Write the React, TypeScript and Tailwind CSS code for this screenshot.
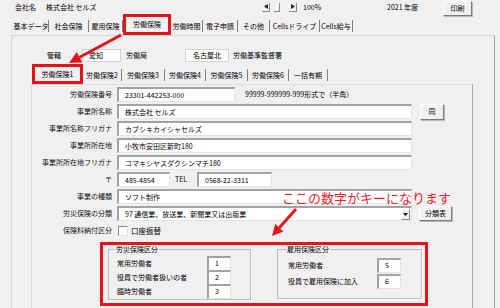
import React from "react";

const RED = "#e5141a";

function Field({ className = "", children }: { className?: string; children?: React.ReactNode }) {
  return (
    <div
      className={`h-[15px] bg-white border-l-2 border-t-2 border-r border-b border-l-[#a3a3a3] border-t-[#a3a3a3] border-r-[#e4e4e4] border-b-[#e4e4e4] flex items-center pl-[6px] whitespace-nowrap overflow-hidden ${className}`}
    >
      {children}
    </div>
  );
}

function Btn({ className = "", children }: { className?: string; children?: React.ReactNode }) {
  return (
    <div
      className={`bg-[#f0f0f0] border border-t-white border-l-white border-r-[#7a7a7a] border-b-[#7a7a7a] shadow-[1px_1px_0_#b9b9b9] flex items-center justify-center ${className}`}
    >
      {children}
    </div>
  );
}

function Row({ label, children }: { label: string; children?: React.ReactNode }) {
  return (
    <div className="h-[17px] flex items-center">
      <div className="w-[80px] text-right whitespace-nowrap text-[#111]">{label}</div>
      <div className="ml-[5px] flex items-center">{children}</div>
    </div>
  );
}

export default function App() {
  const outerTabs = [
    { name: "基本データ", w: "w-[35px]" },
    { name: "社会保険", w: "w-[40px]" },
    { name: "雇用保険", w: "w-[34px]" },
    { name: "労働保険", w: "w-[48px]", active: true },
    { name: "労働時間", w: "w-[32px]" },
    { name: "電子申請", w: "w-[35px]" },
    { name: "その他", w: "w-[32px]" },
    { name: "Cellsドライブ", w: "w-[50px]" },
    { name: "Cells給与", w: "w-[33px]" },
  ];
  const innerTabs = [
    { name: "労働保険1", w: "w-[51px]", active: true },
    { name: "労働保険2", w: "w-[39px]" },
    { name: "労働保険3", w: "w-[43px]" },
    { name: "労働保険4", w: "w-[41px]" },
    { name: "労働保険5", w: "w-[42px]" },
    { name: "労働保険6", w: "w-[41px]" },
    { name: "一括有期", w: "w-[39px]" },
  ];

  return (
    <div className="w-[500px] h-[308px] bg-[#f0f0f0] overflow-hidden relative text-[7px] leading-none text-black font-['Noto_Sans_CJK_JP','Liberation_Sans',sans-serif]">
      {/* top row */}
      <div className="h-[14px] flex items-center">
        <div className="w-[262px] flex pl-[15px]">
          <span>会社名</span>
          <span className="ml-[10px]">株式会社 セルズ</span>
        </div>
        <div className="w-[125px] flex items-center">
          <div className="w-[8px] h-[9px] border-r border-b border-[#8a8a8a] bg-[#f4f4f4] flex items-center justify-center">
            <svg width="4" height="5" viewBox="0 0 4 5"><polygon points="4,0 4,5 0,2.5" fill="#222" /></svg>
          </div>
          <div className="ml-[4px] w-[6px] h-[9px] border-r border-b border-[#8a8a8a] bg-[#f4f4f4]" />
          <div className="ml-[9px] w-[8px] h-[9px] border-r border-b border-[#8a8a8a] bg-[#f4f4f4] flex items-center justify-center">
            <svg width="4" height="5" viewBox="0 0 4 5"><polygon points="0,0 0,5 4,2.5" fill="#222" /></svg>
          </div>
          <span className="ml-[6px]">100%</span>
        </div>
        <div className="w-[56px]">2021 年度</div>
        <Btn className="w-[29px] h-[15px] self-start mt-[1px]">印刷</Btn>
      </div>

      {/* outer tabs */}
      <div className="h-[21px] flex items-start pl-[14px]">
        {outerTabs.map((t) =>
          t.active ? (
            <div key={t.name} className={`${t.w} h-[21px] border-[3px] border-[#e5141a] flex items-center justify-center whitespace-nowrap`}>
              {t.name}
            </div>
          ) : (
            <div key={t.name} className={`${t.w} h-[12px] mt-[6px] border-r border-[#7f7f7f] flex items-center justify-center whitespace-nowrap`}>
              {t.name}
            </div>
          )
        )}
      </div>

      {/* outer panel */}
      <div className="ml-[11px] w-[484px] h-[273px] border-l border-t border-r border-l-[#d6d6d6] border-t-[#d6d6d6] border-r-[#a0a0a0]">
        <div className="mt-[12px] h-[14px] flex items-center pl-[35px]">
          <span className="w-[14px]">管轄</span>
          <div className="ml-[21px] w-[39px] h-[13px] bg-white border border-[#d4d4d4] flex items-center pl-[6px]">愛知</div>
          <span className="ml-[5px] w-[21px]">労働局</span>
          <div className="ml-[38px] w-[44px] h-[13px] bg-white border border-[#d4d4d4] flex items-center justify-center">名古屋北</div>
          <span className="ml-[4px]">労働基準監督署</span>
        </div>

        {/* inner tabs */}
        <div className="mt-[2px] h-[20px] flex items-start pl-[20px]">
          {innerTabs.map((t) =>
            t.active ? (
              <div key={t.name} className={`${t.w} h-[20px] border-[3px] border-[#e5141a] flex items-center justify-center whitespace-nowrap`}>
                {t.name}
              </div>
            ) : (
              <div key={t.name} className={`${t.w} h-[12px] mt-[5px] border-r border-[#7f7f7f] flex items-center justify-center whitespace-nowrap`}>
                {t.name}
              </div>
            )
          )}
        </div>

        {/* inner panel */}
        <div className="ml-[19px] w-[442px] h-[240px] border-l border-t border-r border-l-[#dcdcdc] border-t-[#dcdcdc] border-r-[#a6a6a6] pt-[1px]">
          <Row label="労働保険番号">
            <Field className="w-[118px]">23301-442253-000</Field>
            <span className="ml-[10px] whitespace-nowrap">99999-999999-999形式で（半角）</span>
          </Row>
          <Row label="事業所名称">
            <Field className="w-[295px]">株式会社 セルズ</Field>
            <Btn className="ml-[8px] w-[24px] h-[16px]">同</Btn>
          </Row>
          <Row label="事業所名称フリガナ">
            <Field className="w-[295px]">カブシキカイシャセルズ</Field>
          </Row>
          <Row label="事業所所在地">
            <Field className="w-[295px]">小牧市安田区新町180</Field>
          </Row>
          <Row label="事業所所在地フリガナ">
            <Field className="w-[295px]">コマキシヤスダクシンマチ180</Field>
          </Row>
          <Row label="〒">
            <Field className="w-[53px]">485-4854</Field>
            <span className="ml-[5px] w-[22px]">TEL</span>
            <Field className="w-[75px]">0568-22-3311</Field>
          </Row>
          <Row label="事業の種類">
            <Field className="w-[295px]">ソフト制作</Field>
          </Row>
          <Row label="労災保険の分類">
            <Field className="w-[295px] pr-[1px]">
              <span className="flex-1">97 通信業、放送業、新聞業又は出版業</span>
              <div className="w-[9px] h-[11px] bg-[#f0f0f0] border border-t-white border-l-white border-r-[#8a8a8a] border-b-[#8a8a8a] flex items-center justify-center">
                <svg width="5" height="3" viewBox="0 0 5 3"><polygon points="0,0 5,0 2.5,3" fill="#111" /></svg>
              </div>
            </Field>
            <Btn className="ml-[7px] w-[33px] h-[15px]">分類表</Btn>
          </Row>
          <Row label="保険料納付区分">
            <div className="ml-[1px] w-[10px] h-[10px] bg-white border-l border-t border-r border-b border-l-[#8a8a8a] border-t-[#8a8a8a] border-r-[#e0e0e0] border-b-[#e0e0e0]" />
            <span className="ml-[3px] text-[7.5px]">口座振替</span>
          </Row>

          {/* highlighted groups */}
          <div className="ml-[68px] mt-[3px] w-[328px] h-[64px] border-[3px] border-[#e5141a] flex items-start pl-[5px]">
            <fieldset className="w-[143px] border border-[#bcbcbc] shadow-[1px_1px_0_#fff] pl-[8px] pb-[1px]">
              <legend className="ml-[-2px] px-[1px] leading-[8px]">労災保険区分</legend>
              <div className="pt-[3px]">
                {[
                  ["常用労働者", "1"],
                  ["役員で労働者扱いの者", "2"],
                  ["臨時労働者", "3"],
                ].map(([l, v]) => (
                  <div key={l} className="h-[14px] flex items-center">
                    <span className="w-[90px] whitespace-nowrap">{l}</span>
                    <Field className="w-[24px] h-[13px]">{v}</Field>
                  </div>
                ))}
              </div>
            </fieldset>
            <fieldset className="ml-[26px] w-[145px] h-[54px] border border-[#bcbcbc] shadow-[1px_1px_0_#fff] pl-[10px]">
              <legend className="ml-[-2px] px-[1px] leading-[8px]">雇用保険区分</legend>
              <div className="pt-[4px]">
                {[
                  ["常用労働者", "5"],
                  ["役員で雇用保険に加入", "6"],
                ].map(([l, v]) => (
                  <div key={l} className="h-[16px] flex items-center">
                    <span className="w-[89px] whitespace-nowrap">{l}</span>
                    <Field className="w-[24px] h-[14px]">{v}</Field>
                  </div>
                ))}
              </div>
            </fieldset>
          </div>
        </div>
      </div>

      {/* annotations */}
      <svg className="absolute left-0 top-0 pointer-events-none" width="500" height="308" viewBox="0 0 500 308">
        <line x1="121" y1="35" x2="79.6" y2="57.3" stroke={RED} strokeWidth="3" />
        <polygon points="69,63 82.4,62.6 76.7,52" fill={RED} />
        <line x1="296" y1="209" x2="279.3" y2="227.8" stroke={RED} strokeWidth="3" />
        <polygon points="272,236 283.4,231.4 275.2,224.1" fill={RED} />
      </svg>
      <div className="absolute left-[282px] top-[191px] text-[13px] leading-none text-[#e8262b] whitespace-nowrap">
        ここの数字がキーになります
      </div>
    </div>
  );
}
